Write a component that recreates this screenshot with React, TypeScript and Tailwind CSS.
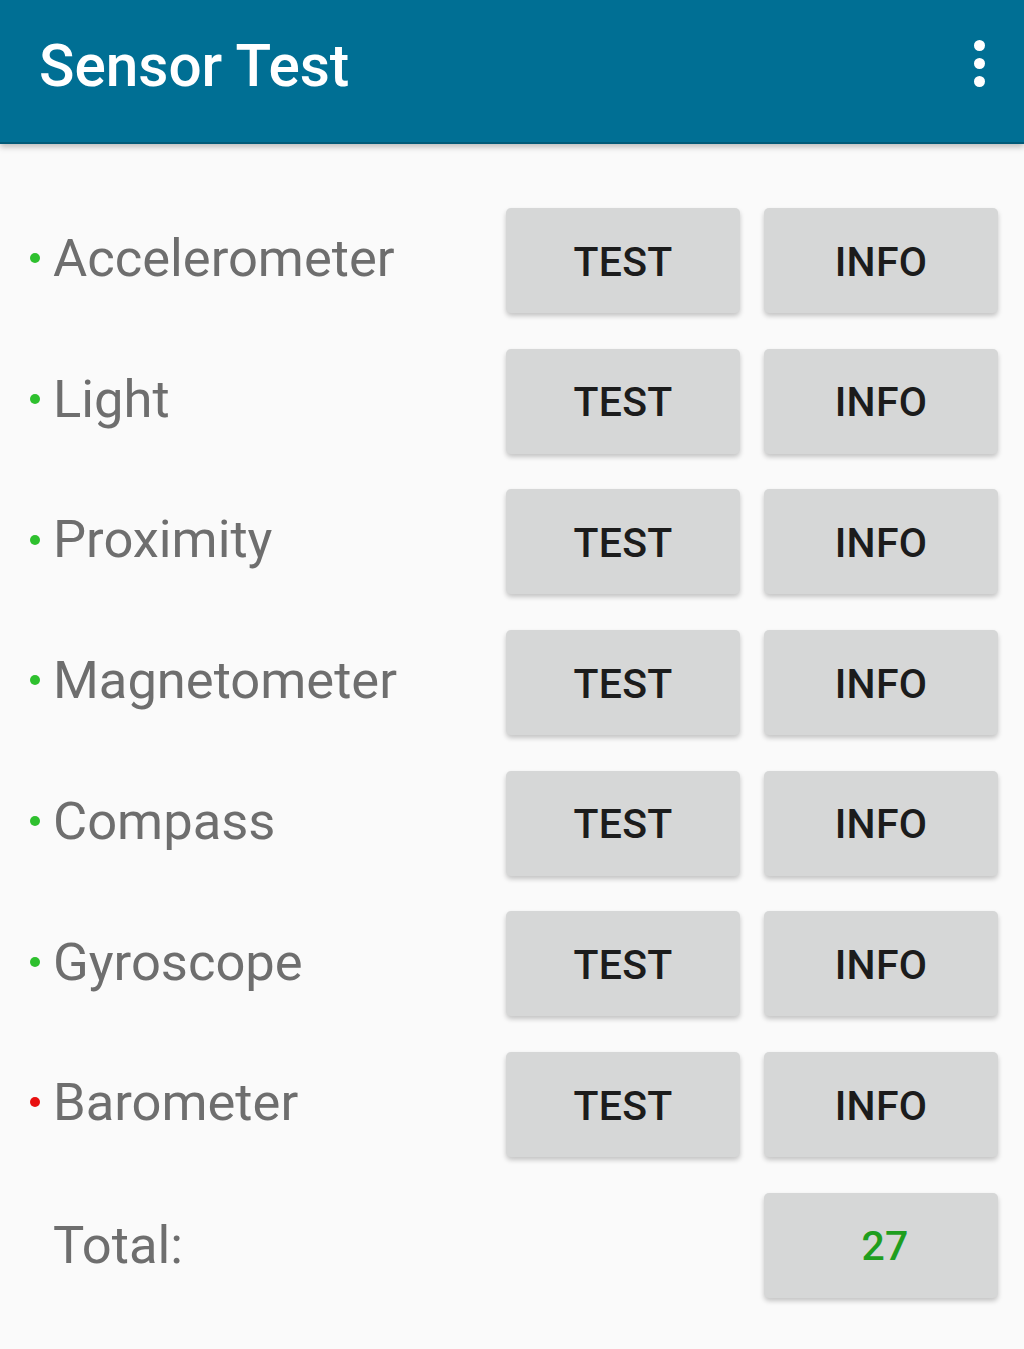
const sensors = [
  { name: 'Accelerometer', ok: true },
  { name: 'Light', ok: true },
  { name: 'Proximity', ok: true },
  { name: 'Magnetometer', ok: true },
  { name: 'Compass', ok: true },
  { name: 'Gyroscope', ok: true },
  { name: 'Barometer', ok: false },
]

function Button({ children, className = '' }: { children: React.ReactNode; className?: string }) {
  return (
    <div
      className={`w-[234px] h-[105px] rounded-[5px] bg-[#d6d7d7] shadow-[0_3px_5px_rgba(0,0,0,0.22)] flex items-center justify-center text-[41px] font-medium tracking-[0.3px] pt-[4px] ${className}`}
    >
      {children}
    </div>
  )
}

export default function App() {
  return (
    <div className="w-[1024px] h-[1349px] bg-[#fafafa] overflow-hidden" style={{ fontFamily: 'Roboto, "Noto Sans", sans-serif' }}>
      <header className="h-[144px] bg-[#006f94] border-b-2 border-[#005a78] shadow-[0_3px_6px_rgba(0,0,0,0.25)] flex items-center justify-between pl-[39px] pr-[30px] pb-[10px]">
        <h1 className="text-white text-[58.5px] font-medium leading-none">Sensor Test</h1>
        <div className="flex flex-col items-center gap-[7px] w-[30px] mb-[6px]">
          <span className="w-[11px] h-[11px] rounded-full bg-white" />
          <span className="w-[11px] h-[11px] rounded-full bg-white" />
          <span className="w-[11px] h-[11px] rounded-full bg-white" />
        </div>
      </header>

      <main className="pt-[46px] pr-[26px]">
        {sensors.map((s) => (
          <div key={s.name} className="h-[140.7px] flex items-center">
            <div className="flex-1 flex items-center pl-[30px]">
              <span className={`w-[10px] h-[10px] rounded-full mr-[13px] mb-[4px] ${s.ok ? 'bg-[#2ec02e]' : 'bg-[#e81010]'}`} />
              <span className="text-[52.5px] text-[#6e6e6e] leading-none pb-[4px]">{s.name}</span>
            </div>
            <div className="flex gap-[24px] text-[#1c1c1c]">
              <Button>TEST</Button>
              <Button>INFO</Button>
            </div>
          </div>
        ))}
        <div className="h-[140.7px] flex items-center">
          <div className="flex-1 pl-[53px]">
            <span className="text-[52.5px] text-[#6e6e6e] leading-none">Total:</span>
          </div>
          <Button className="text-[#1f9e1f] pl-[8px]">27</Button>
        </div>
      </main>
    </div>
  )
}
